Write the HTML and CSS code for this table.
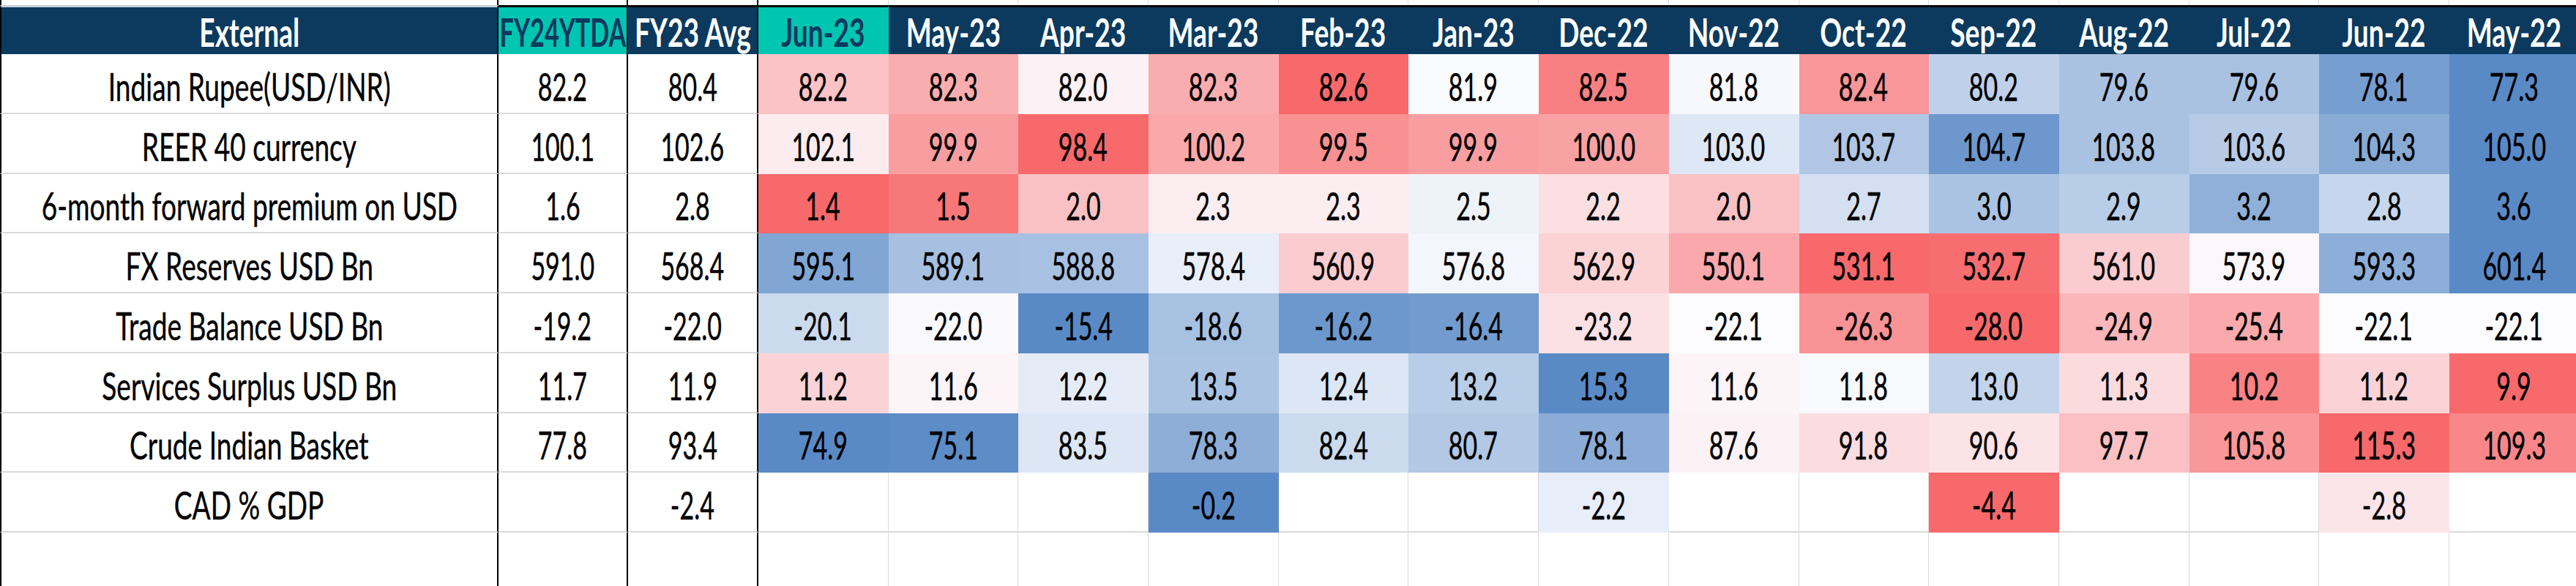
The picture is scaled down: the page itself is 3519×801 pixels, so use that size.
FILE: index.html
```html
<!DOCTYPE html>
<html>
<head>
<meta charset="utf-8">
<link rel="stylesheet" href="styles.css">
</head>
<body>
<div class="sheet">
  <div class="row strip">
    <div class="c lab"></div><div class="c fy"></div><div class="c fy2"></div>
    <div class="c m"></div><div class="c m"></div><div class="c m"></div><div class="c m"></div><div class="c m"></div><div class="c m"></div><div class="c m"></div>
    <div class="c m"></div><div class="c m"></div><div class="c m"></div><div class="c m"></div><div class="c m"></div><div class="c m"></div><div class="c m"></div>
  </div>
  <div class="row head">
    <div class="c lab hd-lab"><span class="t ht">External</span></div>
    <div class="c fy teal"><span class="t ht narrow">FY24YTDA</span></div>
    <div class="c fy2"><span class="t ht">FY23 Avg</span></div>
    <div class="c m teal"><span class="t ht">Jun-23</span></div>
    <div class="c m"><span class="t ht">May-23</span></div>
    <div class="c m"><span class="t ht">Apr-23</span></div>
    <div class="c m"><span class="t ht">Mar-23</span></div>
    <div class="c m"><span class="t ht">Feb-23</span></div>
    <div class="c m"><span class="t ht">Jan-23</span></div>
    <div class="c m"><span class="t ht">Dec-22</span></div>
    <div class="c m"><span class="t ht">Nov-22</span></div>
    <div class="c m"><span class="t ht">Oct-22</span></div>
    <div class="c m"><span class="t ht">Sep-22</span></div>
    <div class="c m"><span class="t ht">Aug-22</span></div>
    <div class="c m"><span class="t ht">Jul-22</span></div>
    <div class="c m"><span class="t ht">Jun-22</span></div>
    <div class="c m"><span class="t ht">May-22</span></div>
  </div>

  <div class="row data">
    <div class="c lab"><span class="t tl">Indian Rupee(USD/INR)</span></div>
    <div class="c fy"><span class="t tn">82.2</span></div>
    <div class="c fy2"><span class="t tn">80.4</span></div>
    <div class="c m h" style="background:#FBC3C6"><span class="t tn">82.2</span></div>
    <div class="c m h" style="background:#FAADAF"><span class="t tn">82.3</span></div>
    <div class="c m h" style="background:#FCF1F4"><span class="t tn">82.0</span></div>
    <div class="c m h" style="background:#FAADAF"><span class="t tn">82.3</span></div>
    <div class="c m h" style="background:#F8696B"><span class="t tn">82.6</span></div>
    <div class="c m h" style="background:#FAFBFE"><span class="t tn">81.9</span></div>
    <div class="c m h" style="background:#F98082"><span class="t tn">82.5</span></div>
    <div class="c m h" style="background:#F7F8FD"><span class="t tn">81.8</span></div>
    <div class="c m h" style="background:#F99699"><span class="t tn">82.4</span></div>
    <div class="c m h" style="background:#BFD1EA"><span class="t tn">80.2</span></div>
    <div class="c m h" style="background:#AAC2E2"><span class="t tn">79.6</span></div>
    <div class="c m h" style="background:#AAC2E2"><span class="t tn">79.6</span></div>
    <div class="c m h" style="background:#769ED0"><span class="t tn">78.1</span></div>
    <div class="c m h" style="background:#5A8AC6"><span class="t tn">77.3</span></div>
  </div>

  <div class="row data">
    <div class="c lab"><span class="t tl">REER 40 currency</span></div>
    <div class="c fy"><span class="t tn">100.1</span></div>
    <div class="c fy2"><span class="t tn">102.6</span></div>
    <div class="c m h" style="background:#FCECEF"><span class="t tn">102.1</span></div>
    <div class="c m h" style="background:#F99EA0"><span class="t tn">99.9</span></div>
    <div class="c m h" style="background:#F8696B"><span class="t tn">98.4</span></div>
    <div class="c m h" style="background:#FAA9AB"><span class="t tn">100.2</span></div>
    <div class="c m h" style="background:#F99092"><span class="t tn">99.5</span></div>
    <div class="c m h" style="background:#F99EA0"><span class="t tn">99.9</span></div>
    <div class="c m h" style="background:#F9A2A4"><span class="t tn">100.0</span></div>
    <div class="c m h" style="background:#DEE7F5"><span class="t tn">103.0</span></div>
    <div class="c m h" style="background:#B0C6E4"><span class="t tn">103.7</span></div>
    <div class="c m h" style="background:#6E98CD"><span class="t tn">104.7</span></div>
    <div class="c m h" style="background:#A9C2E2"><span class="t tn">103.8</span></div>
    <div class="c m h" style="background:#B7CBE7"><span class="t tn">103.6</span></div>
    <div class="c m h" style="background:#88ABD6"><span class="t tn">104.3</span></div>
    <div class="c m h" style="background:#5A8AC6"><span class="t tn">105.0</span></div>
  </div>

  <div class="row data">
    <div class="c lab"><span class="t tl">6-month forward premium on USD</span></div>
    <div class="c fy"><span class="t tn">1.6</span></div>
    <div class="c fy2"><span class="t tn">2.8</span></div>
    <div class="c m h" style="background:#F8696B"><span class="t tn">1.4</span></div>
    <div class="c m h" style="background:#F8787A"><span class="t tn">1.5</span></div>
    <div class="c m h" style="background:#FAC1C4"><span class="t tn">2.0</span></div>
    <div class="c m h" style="background:#FCEDF0"><span class="t tn">2.3</span></div>
    <div class="c m h" style="background:#FCEDF0"><span class="t tn">2.3</span></div>
    <div class="c m h" style="background:#EEF3FA"><span class="t tn">2.5</span></div>
    <div class="c m h" style="background:#FBDFE1"><span class="t tn">2.2</span></div>
    <div class="c m h" style="background:#FAC1C4"><span class="t tn">2.0</span></div>
    <div class="c m h" style="background:#D4E0F1"><span class="t tn">2.7</span></div>
    <div class="c m h" style="background:#ABC3E2"><span class="t tn">3.0</span></div>
    <div class="c m h" style="background:#B8CDE7"><span class="t tn">2.9</span></div>
    <div class="c m h" style="background:#90B0D9"><span class="t tn">3.2</span></div>
    <div class="c m h" style="background:#C6D6EC"><span class="t tn">2.8</span></div>
    <div class="c m h" style="background:#5A8AC6"><span class="t tn">3.6</span></div>
  </div>

  <div class="row data">
    <div class="c lab"><span class="t tl">FX Reserves USD Bn</span></div>
    <div class="c fy"><span class="t tn">591.0</span></div>
    <div class="c fy2"><span class="t tn">568.4</span></div>
    <div class="c m h" style="background:#81A6D4"><span class="t tn">595.1</span></div>
    <div class="c m h" style="background:#A7C0E1"><span class="t tn">589.1</span></div>
    <div class="c m h" style="background:#A8C1E2"><span class="t tn">588.8</span></div>
    <div class="c m h" style="background:#E9EFF8"><span class="t tn">578.4</span></div>
    <div class="c m h" style="background:#FBCCCF"><span class="t tn">560.9</span></div>
    <div class="c m h" style="background:#F3F6FC"><span class="t tn">576.8</span></div>
    <div class="c m h" style="background:#FBD3D5"><span class="t tn">562.9</span></div>
    <div class="c m h" style="background:#FAA8AB"><span class="t tn">550.1</span></div>
    <div class="c m h" style="background:#F8696B"><span class="t tn">531.1</span></div>
    <div class="c m h" style="background:#F86E70"><span class="t tn">532.7</span></div>
    <div class="c m h" style="background:#FBCCCF"><span class="t tn">561.0</span></div>
    <div class="c m h" style="background:#FCF7FA"><span class="t tn">573.9</span></div>
    <div class="c m h" style="background:#8CAED8"><span class="t tn">593.3</span></div>
    <div class="c m h" style="background:#5A8AC6"><span class="t tn">601.4</span></div>
  </div>

  <div class="row data">
    <div class="c lab"><span class="t tl">Trade Balance USD Bn</span></div>
    <div class="c fy"><span class="t tn">-19.2</span></div>
    <div class="c fy2"><span class="t tn">-22.0</span></div>
    <div class="c m h" style="background:#CCDAEE"><span class="t tn">-20.1</span></div>
    <div class="c m h" style="background:#FAFAFE"><span class="t tn">-22.0</span></div>
    <div class="c m h" style="background:#5A8AC6"><span class="t tn">-15.4</span></div>
    <div class="c m h" style="background:#A7C1E1"><span class="t tn">-18.6</span></div>
    <div class="c m h" style="background:#6D98CD"><span class="t tn">-16.2</span></div>
    <div class="c m h" style="background:#729BCF"><span class="t tn">-16.4</span></div>
    <div class="c m h" style="background:#FBE1E3"><span class="t tn">-23.2</span></div>
    <div class="c m h" style="background:#FCFCFF"><span class="t tn">-22.1</span></div>
    <div class="c m h" style="background:#F99396"><span class="t tn">-26.3</span></div>
    <div class="c m h" style="background:#F8696B"><span class="t tn">-28.0</span></div>
    <div class="c m h" style="background:#FAB6B9"><span class="t tn">-24.9</span></div>
    <div class="c m h" style="background:#FAAAAC"><span class="t tn">-25.4</span></div>
    <div class="c m h" style="background:#FCFCFF"><span class="t tn">-22.1</span></div>
    <div class="c m h" style="background:#FCFCFF"><span class="t tn">-22.1</span></div>
  </div>

  <div class="row data">
    <div class="c lab"><span class="t tl">Services Surplus USD Bn</span></div>
    <div class="c fy"><span class="t tn">11.7</span></div>
    <div class="c fy2"><span class="t tn">11.9</span></div>
    <div class="c m h" style="background:#FBD3D6"><span class="t tn">11.2</span></div>
    <div class="c m h" style="background:#FCF4F7"><span class="t tn">11.6</span></div>
    <div class="c m h" style="background:#E6ECF7"><span class="t tn">12.2</span></div>
    <div class="c m h" style="background:#ABC3E3"><span class="t tn">13.5</span></div>
    <div class="c m h" style="background:#DCE6F4"><span class="t tn">12.4</span></div>
    <div class="c m h" style="background:#B8CDE7"><span class="t tn">13.2</span></div>
    <div class="c m h" style="background:#5A8AC6"><span class="t tn">15.3</span></div>
    <div class="c m h" style="background:#FCF4F7"><span class="t tn">11.6</span></div>
    <div class="c m h" style="background:#F8F9FD"><span class="t tn">11.8</span></div>
    <div class="c m h" style="background:#C2D3EA"><span class="t tn">13.0</span></div>
    <div class="c m h" style="background:#FBDBDE"><span class="t tn">11.3</span></div>
    <div class="c m h" style="background:#F98284"><span class="t tn">10.2</span></div>
    <div class="c m h" style="background:#FBD3D6"><span class="t tn">11.2</span></div>
    <div class="c m h" style="background:#F8696B"><span class="t tn">9.9</span></div>
  </div>

  <div class="row data">
    <div class="c lab"><span class="t tl">Crude Indian Basket</span></div>
    <div class="c fy"><span class="t tn">77.8</span></div>
    <div class="c fy2"><span class="t tn">93.4</span></div>
    <div class="c m h" style="background:#5A8AC6"><span class="t tn">74.9</span></div>
    <div class="c m h" style="background:#5D8CC7"><span class="t tn">75.1</span></div>
    <div class="c m h" style="background:#DDE6F4"><span class="t tn">83.5</span></div>
    <div class="c m h" style="background:#8EAED8"><span class="t tn">78.3</span></div>
    <div class="c m h" style="background:#CCDAEE"><span class="t tn">82.4</span></div>
    <div class="c m h" style="background:#B2C8E5"><span class="t tn">80.7</span></div>
    <div class="c m h" style="background:#8BACD7"><span class="t tn">78.1</span></div>
    <div class="c m h" style="background:#FCF2F5"><span class="t tn">87.6</span></div>
    <div class="c m h" style="background:#FBDDE0"><span class="t tn">91.8</span></div>
    <div class="c m h" style="background:#FBE3E6"><span class="t tn">90.6</span></div>
    <div class="c m h" style="background:#FAC0C3"><span class="t tn">97.7</span></div>
    <div class="c m h" style="background:#F9989A"><span class="t tn">105.8</span></div>
    <div class="c m h" style="background:#F8696B"><span class="t tn">115.3</span></div>
    <div class="c m h" style="background:#F98789"><span class="t tn">109.3</span></div>
  </div>

  <div class="row data">
    <div class="c lab"><span class="t tl">CAD % GDP</span></div>
    <div class="c fy"></div>
    <div class="c fy2"><span class="t tn">-2.4</span></div>
    <div class="c m"></div>
    <div class="c m"></div>
    <div class="c m"></div>
    <div class="c m h" style="background:#5A8AC6"><span class="t tn">-0.2</span></div>
    <div class="c m"></div>
    <div class="c m"></div>
    <div class="c m h" style="background:#E7EDF9"><span class="t tn">-2.2</span></div>
    <div class="c m"></div>
    <div class="c m"></div>
    <div class="c m h" style="background:#F8696B"><span class="t tn">-4.4</span></div>
    <div class="c m"></div>
    <div class="c m"></div>
    <div class="c m h" style="background:#FBE5E8"><span class="t tn">-2.8</span></div>
    <div class="c m"></div>
  </div>

  <div class="row blank">
    <div class="c lab"></div><div class="c fy"></div><div class="c fy2"></div>
    <div class="c m"></div><div class="c m"></div><div class="c m"></div><div class="c m"></div><div class="c m"></div><div class="c m"></div><div class="c m"></div>
    <div class="c m"></div><div class="c m"></div><div class="c m"></div><div class="c m"></div><div class="c m"></div><div class="c m"></div><div class="c m"></div>
  </div>
</div>
</body>
</html>
```

FILE: styles.css
```css
html, body {
  margin: 0;
  padding: 0;
  background: #ffffff;
  overflow: hidden;
}

.sheet {
  width: 3524px;
  font-family: Lato, "Open Sans", "Liberation Sans", sans-serif;
  color: #000000;
}

.row {
  display: grid;
  grid-template-columns: 681px 177px 178px repeat(14, 177.7px);
}

.c {
  box-sizing: border-box;
  display: flex;
  align-items: center;
  justify-content: center;
  min-width: 0;
  border-right: 1px solid #dadada;
  border-bottom: 2px solid #dadada;
}

.c.lab {
  border-left: 2px solid #000000;
  border-right: 2px solid #000000;
}

.c.fy,
.c.fy2 {
  border-right: 2px solid #000000;
}

.strip {
  height: 7px;
}

.strip .c {
  border-bottom: 0;
}

.head {
  height: 67px;
}

.head .c {
  background: #0b3a5e;
  color: #ffffff;
  border-bottom: 0;
  border-top: 3px solid #000000;
  padding-top: 3px;
}

.head .c.m {
  border-right-color: #0b3a5e;
}

.head .c.hd-lab {
  border-top-color: #c9d2da;
}

.head .c.teal {
  background: #00c5b1;
  color: #0b3a5e;
}

.head .c.m.teal {
  border-right-color: #00c5b1;
}

.data {
  height: 81.75px;
}

.data .c {
  padding-top: 7px;
}

.blank {
  height: 90px;
}

.c.h {
  border-right-color: transparent;
  border-bottom-color: transparent;
}

.t {
  display: inline-block;
  white-space: nowrap;
  font-size: 53px;
  line-height: 1;
  transform-origin: center center;
}

.ht {
  font-weight: 700;
  transform: scaleX(0.7);
}

.ht.narrow {
  transform: scaleX(0.645);
}

.tl {
  font-weight: 400;
  -webkit-text-stroke: 0.4px #000000;
  transform: scaleX(0.7);
}

.tn {
  font-weight: 400;
  -webkit-text-stroke: 0.5px #000000;
  transform: scaleX(0.64);
}
```
